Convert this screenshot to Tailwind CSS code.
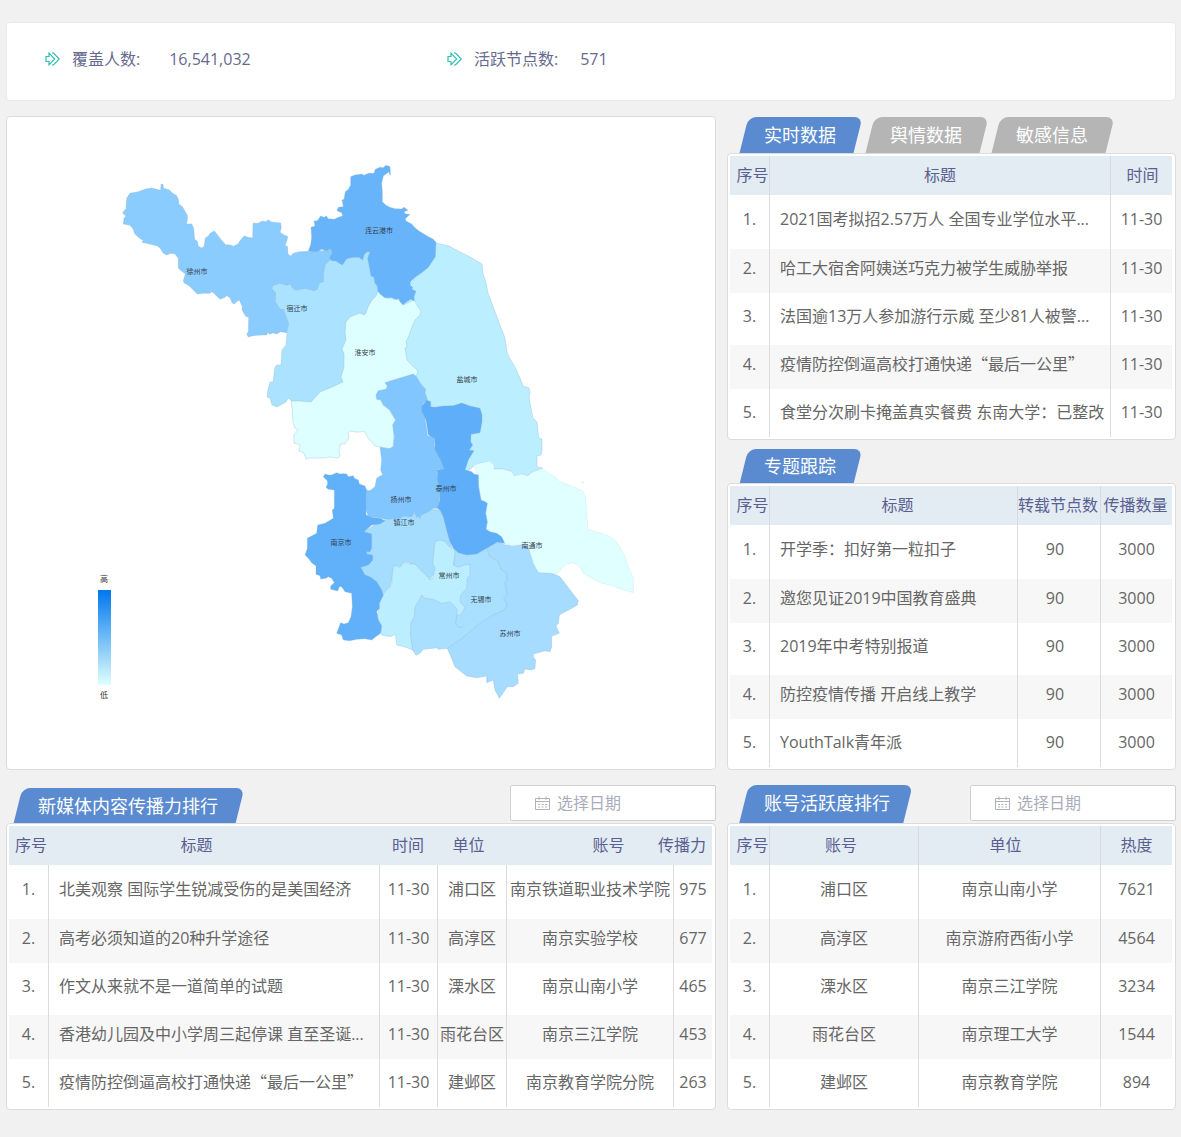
<!DOCTYPE html>
<html lang="zh-CN">
<head>
<meta charset="utf-8">
<meta name="viewport" content="width=device-width, initial-scale=1">
<title>数据总览</title>
<script src="https://cdn.jsdelivr.net/npm/@tailwindcss/browser@4"></script>
</head>
<body class="min-h-screen bg-[#f1f1f1] pt-[22px] pr-[5px] pb-7 pl-1.5 font-['Open_Sans','Noto_Sans_CJK_SC',sans-serif] text-base text-[#666]">

<!-- Totals -->
<section class="flex h-[79px] items-center rounded border border-[#e9e9e9] bg-white pb-1.5 pl-[38px] text-[#666a8f]">
  <dl class="flex w-[402px] items-center">
    <dt class="flex items-center gap-3">
      <svg class="h-3.5 w-[15px]" viewBox="0 0 15 14" fill="none" stroke="#2fbfb3" stroke-width="1.2" aria-hidden="true"><path d="M1 4.5h3V1.2L9.7 7 4 12.8V9.500H1z"/><path d="M7 1h1.500L14.200 7l-5.700 6H7"/></svg>
      覆盖人数:
    </dt>
    <dd class="ml-[29px]">16,541,032</dd>
  </dl>
  <dl class="flex items-center">
    <dt class="flex items-center gap-3">
      <svg class="h-3.5 w-[15px]" viewBox="0 0 15 14" fill="none" stroke="#2fbfb3" stroke-width="1.2" aria-hidden="true"><path d="M1 4.5h3V1.2L9.7 7 4 12.8V9.500H1z"/><path d="M7 1h1.500L14.200 7l-5.700 6H7"/></svg>
      活跃节点数:
    </dt>
    <dd class="ml-[22px]">571</dd>
  </dl>
</section>

<main class="mt-[15px] grid grid-cols-[minmax(0,710fr)_minmax(0,449fr)] gap-x-[11px] gap-y-[15px]">

  <!-- Province map -->
  <section class="rounded border border-[#dcdcdc] bg-white">
    <svg class="block w-full font-['Noto_Sans_CJK_SC',sans-serif]" viewBox="7 117 708 651" role="img" aria-label="江苏省传播热度地图">
      <defs>
        <linearGradient id="heat" x1="0" y1="0" x2="0" y2="1"><stop offset="0" stop-color="#0077ee"/><stop offset="1" stop-color="#e0ffff"/></linearGradient>
      </defs>
      <g stroke="#8fb4d0" stroke-opacity=".35" stroke-linejoin="round">
        <path id="yancheng" fill="#bbeeff" d="M436 243L449 246L460 252L472 258L482 264L483 273L486 283L488 293L494 309L500 325L505 338L507 352L509 357L515 367L520 378L523 386L529 388L530 393L529 397L531 408L533 418L537 422L538 432L539 438L542 439L542 450L541 455L537 456L537 467L543 468L533 472L530 474L527 476L522 474L515 476L511 471L503 469L494 469L488 462L480 463L475 465L467 472L440 440L428 405L405 385L395 345L400 300L420 270Z"/>
        <path id="huaian" fill="#deffff" d="M378 291L385 298L400 300L403 305L414 300L417 305L421 311L420 315L415 320L412 327L408 338L406 341L407 347L405 348L407 360L415 368L418 371L417 374L400 400L383 405L390 410L392 415L396 420L393 425L394 433L393 447L389 449L382 447L375 446L368 438L364 431L360 432L356 432L350 431L348 433L349 438L346 442L345 444L340 444L340 448L339 450L340 456L338 458L330 457L323 458L310 458L306 459L304 453L299 451L300 445L294 443L294 435L298 430L295 428L293 422L292 407L291 402L300 380L335 340L340 310L360 290Z"/>
        <path id="suqian" fill="#abe2ff" d="M272 285L300 270L340 240L372 240L378 291L376 296L372 300L368 307L366 313L364 315L360 313L350 317L346 322L345 332L346 340L342 349L344 354L344 367L341 377L343 382L332 387L320 392L311 402L300 401L292 401L288 398L286 402L277 407L272 405L270 398L267 397L268 390L270 382L273 382L275 367L277 365L281 365L282 350L286 345L287 333L284 324L278 312L272 301L272 292Z"/>
        <path id="xuzhou" fill="#8bccff" stroke-width="3" transform="translate(110 150) scale(.33333)" d="M50 145L60 130L85 125L107 117L125 114L140 118L152 121L153 103L159 103L161 115L178 120L188 130L200 137L205 148L207 163L217 170L224 182L232 196L232 210L229 222L245 222L251 235L254 268L262 274L265 288L274 294L282 290L286 264L295 258L300 250L313 243L322 254L334 270L347 284L362 285L370 289L385 281L390 272L402 258L415 262L428 264L429 220L445 220L456 213L466 215L475 210L485 216L512 219L514 234L510 247L522 255L533 259L531 272L525 286L533 290L534 313L542 318L550 310L568 305L597 304L620 300L635 303L655 297L667 310L660 330L645 345L640 375L640 395L628 398L622 418L612 422L585 415L558 421L548 415L542 403L528 406L520 402L508 400L488 407L484 415L497 428L496 455L510 478L520 478L533 512L536 523L530 548L512 545L500 552L488 549L478 553L474 547L470 555L460 555L440 556L425 558L415 561L410 552L415 545L416 500L408 500L396 480L397 470L388 450L380 455L372 462L366 458L360 443L350 437L345 442L330 448L322 440L312 430L305 425L300 430L280 430L262 432L250 420L238 408L222 398L220 392L226 372L205 355L205 325L195 312L183 310L170 315L160 310L150 294L142 288L130 285L110 280L95 277L100 272L85 262L73 250L70 238L60 226L40 222L42 205L48 198L38 190L42 182L48 178Z"/>
        <path id="lianyungang" fill="#67b4fb" stroke-width="3" transform="translate(300 150) scale(.33333)" d="M152 80L165 75L185 72L192 76L205 70L222 70L226 58L240 52L250 53L258 46L270 50L271 62L271 76L266 66L250 78L245 100L247 125L247 155L258 166L270 172L285 176L305 177L312 172L324 181L312 185L316 192L330 193L316 206L318 213L335 222L345 233L357 243L380 257L400 268L408 277L406 320L395 337L385 352L365 368L345 382L332 395L330 405L338 412L336 418L348 424L342 440L343 452L332 448L320 455L309 464L300 455L297 447L285 448L275 443L255 443L240 432L234 424L232 408L225 400L222 382L213 378L207 345L203 325L210 305L200 306L192 315L188 330L177 322L160 322L140 326L127 345L118 340L108 333L95 332L88 325L97 308L90 296L82 302L65 298L50 305L25 303L32 285L35 262L33 232L45 228L42 213L52 212L62 198L72 202L80 198L84 206L103 208L115 202L128 198L125 188L111 182L115 172L130 170L126 150L132 148L136 125L145 118L152 105Z"/>
        <path id="zhenjiang" fill="#a5ddff" stroke-width="3" transform="translate(290 460) scale(.33333)" d="M270 185L285 180L320 172L350 165L400 155L430 148L450 150L465 180L480 245L500 320L440 330L420 358L400 340L380 318L345 305L330 325L310 318L305 360L300 385L280 400L230 360L200 320L220 215Z"/>
        <path id="wuxi" fill="#a9e0ff" stroke-width="3" transform="translate(370 520) scale(.33333)" d="M255 80L300 85L350 80L358 108L385 125L395 150L410 158L412 180L405 190L412 225L402 235L412 255L405 270L370 285L330 310L270 360L235 385L205 388L200 383L190 385L160 388L150 400L138 406L128 390L115 340L125 240L180 180L250 140Z"/>
        <path id="changzhou" fill="#bbeeff" stroke-width="3" transform="translate(370 520) scale(.33333)" d="M195 65L210 60L225 65L238 80L253 88L255 105L250 135L265 142L280 136L300 132L300 165L292 175L290 205L272 225L270 245L285 262L275 282L260 288L262 270L250 255L240 246L215 250L190 238L165 235L155 225L148 240L135 260L133 290L122 310L122 350L128 390L108 382L80 375L77 343L60 350L35 345L32 320L20 290L30 260L28 245L45 215L65 195L68 150L75 135L90 142L100 127L115 132L135 132L150 148L162 160L180 180L188 175L195 145L188 130Z"/>
        <path id="lake" fill="none" stroke-width="3" transform="translate(370 520) scale(.33333)" d="M260 288L257 310L264 320L274 323L281 318"/>
        <path id="suzhou" fill="#a5dcff" stroke-width="3" transform="translate(370 520) scale(.33333)" d="M352 85L375 68L390 65L405 75L440 77L470 70L485 110L500 150L510 158L545 160L570 170L625 242L622 255L600 268L585 275L568 285L565 310L558 318L568 340L545 348L545 380L540 395L525 392L490 402L490 412L497 420L495 445L485 450L465 447L460 460L442 462L445 490L430 500L412 500L388 535L375 510L370 480L350 488L350 468L320 473L290 468L255 440L243 410L232 385L270 360L330 310L370 285L405 270L412 255L402 235L412 225L405 190L412 180L410 158L395 150L385 125L358 108Z"/>
        <path id="nantong" fill="#e0ffff" stroke-opacity=".15" stroke-width="3" transform="translate(400 370) scale(.33333)" d="M220 285L240 280L268 273L282 285L282 298L310 298L330 305L342 318L365 312L385 318L392 310L400 305L428 295L440 305L465 320L475 332L505 345L530 355L548 362L556 380L560 420L563 465L562 478L580 483L610 492L640 505L660 530L675 560L685 590L700 625L700 668L670 660L640 648L600 638L575 625L550 610L540 590L520 578L500 583L485 595L472 612L455 610L415 607L400 580L385 530L368 522L335 528L314 520L258 478L262 455L257 430L262 400L243 390L236 350L235 315ZM543 337L552 337L549 339Z"/>
        <path id="yangzhou" fill="#81c6ff" stroke-width="3" transform="translate(260 370) scale(.33333)" d="M375 38L400 30L440 18L460 12L470 20L478 35L485 45L497 58L495 68L502 88L490 100L485 125L495 145L503 198L522 200L522 230L540 240L540 265L552 285L550 300L535 297L530 310L540 350L538 400L535 415L520 415L505 425L482 436L480 446L478 437L470 442L463 427L455 440L430 438L420 445L375 448L350 442L325 440L318 420L318 380L316 360L330 362L345 350L350 325L360 318L368 315L362 300L365 270L360 232L388 236L400 230L403 200L398 165L407 150L395 130L390 120L370 105L362 90L350 88L348 75L355 62L378 58L382 48Z"/>
        <path id="taizhou" fill="#5eaefa" stroke-width="3" transform="translate(400 370) scale(.33333)" d="M65 110L80 90L92 95L92 110L105 112L130 108L160 107L185 99L210 108L240 115L246 135L246 155L240 188L213 193L212 215L218 225L208 240L222 242L212 258L205 270L195 300L215 305L222 312L235 315L236 350L243 390L255 395L262 400L257 430L262 455L258 478L270 485L290 490L305 500L314 520L292 516L265 532L230 552L200 555L175 548L160 535L150 515L140 480L130 440L120 420L112 415L120 390L118 350L112 330L112 300L132 297L122 270L105 240L103 205L85 195L78 150L65 125Z"/>
        <path id="nanjing" fill="#60b0fa" stroke-width="3" transform="translate(290 460) scale(.33333)" d="M100 50L105 42L115 45L125 45L140 38L150 42L160 41L170 42L175 50L190 47L193 55L205 60L208 72L225 78L230 92L228 105L228 165L245 172L270 175L285 182L270 192L245 195L222 215L245 222L245 265L240 275L228 275L232 283L248 285L248 300L235 315L212 322L225 345L240 350L260 365L275 390L280 405L268 430L268 445L260 455L265 480L275 497L272 520L255 532L245 540L225 536L200 538L180 542L160 540L155 525L140 520L152 488L162 492L175 488L183 470L187 440L185 400L165 395L155 380L148 380L143 393L122 388L122 378L133 368L125 355L115 350L108 355L92 357L90 347L78 343L78 318L65 308L55 295L45 285L52 265L52 235L80 220L83 195L105 190L130 175L127 150L133 145L133 90L115 88L108 82L113 72L112 62Z"/>
      </g>
      <g font-size="7" fill="#33414d" text-anchor="middle">
        <text x="379" y="233">连云港市</text>
        <text x="197" y="274">徐州市</text>
        <text x="297" y="311">宿迁市</text>
        <text x="365" y="355">淮安市</text>
        <text x="467" y="382">盐城市</text>
        <text x="446" y="491">泰州市</text>
        <text x="401" y="502">扬州市</text>
        <text x="404" y="525">镇江市</text>
        <text x="341" y="545">南京市</text>
        <text x="532" y="548">南通市</text>
        <text x="449" y="578">常州市</text>
        <text x="481" y="602">无锡市</text>
        <text x="510" y="636">苏州市</text>
      </g>
      <g font-size="8" fill="#333" text-anchor="middle">
        <text x="104" y="582">高</text>
        <text x="104" y="698">低</text>
      </g>
      <rect x="98" y="590" width="13" height="95" fill="url(#heat)"/>
    </svg>
  </section>

  <!-- Live data and topics -->
  <div class="flex flex-col gap-[9px]">
    <section>
      <div class="flex gap-3.5 pt-px pl-[17px] text-lg text-white" role="tablist">
        <button type="button" role="tab" aria-selected="true" class="relative isolate h-9 px-5 before:absolute before:inset-y-0 before:left-0 before:-right-0.5 before:-z-10 before:-skew-x-[14deg] before:rounded-t-lg before:bg-[#5a8bd0]">实时数据</button>
        <button type="button" role="tab" aria-selected="false" class="relative isolate h-9 px-5 before:absolute before:inset-y-0 before:left-0 before:-right-0.5 before:-z-10 before:-skew-x-[14deg] before:rounded-t-lg before:bg-[#b5b5b5]">舆情数据</button>
        <button type="button" role="tab" aria-selected="false" class="relative isolate h-9 px-5 before:absolute before:inset-y-0 before:left-0 before:-right-0.5 before:-z-10 before:-skew-x-[14deg] before:rounded-t-lg before:bg-[#b5b5b5]">敏感信息</button>
      </div>
      <div class="rounded border border-[#dcdcdc] bg-white py-0.5 pr-[3px] pl-0.5">
        <table class="w-full table-fixed border-separate border-spacing-0 text-center whitespace-nowrap [&_td]:border-r [&_td]:border-[#dcdcdc] [&_td]:p-0 [&_td]:pb-0.5 [&_td:last-child]:border-r-0 [&_th]:h-[39px] [&_th]:border-r [&_th]:border-[#d5dbe0] [&_th]:p-0 [&_th]:pb-0.5 [&_th]:font-normal [&_th:last-child]:border-r-0">
          <colgroup><col class="w-10"><col><col class="w-[61px]"></colgroup>
          <thead class="bg-[#e3ebf3] text-[#5a5f91]"><tr><th><div class="pl-1.5">序号</div></th><th>标题</th><th><div class="pl-0.5">时间</div></th></tr></thead>
          <tbody class="[&>tr]:h-12 [&>tr:first-child]:h-[50px] [&>tr:nth-child(even)]:bg-[linear-gradient(transparent_4px,#f7f7f7_4px)]">
            <tr><td>1.</td><td><div class="truncate pl-2.5 text-left">2021国考拟招2.57万人 全国专业学位水平...</div></td><td>11-30</td></tr>
            <tr><td>2.</td><td><div class="truncate pl-2.5 text-left">哈工大宿舍阿姨送巧克力被学生威胁举报</div></td><td>11-30</td></tr>
            <tr><td>3.</td><td><div class="truncate pl-2.5 text-left">法国逾13万人参加游行示威 至少81人被警...</div></td><td>11-30</td></tr>
            <tr><td>4.</td><td><div class="truncate pl-2.5 text-left">疫情防控倒逼高校打通快递<span class="font-['Noto_Sans_CJK_SC',sans-serif] leading-none">“最后一公里”</span></div></td><td>11-30</td></tr>
            <tr><td>5.</td><td><div class="truncate pl-2.5 text-left">食堂分次刷卡掩盖真实餐费 东南大学：已整改</div></td><td>11-30</td></tr>
          </tbody>
        </table>
      </div>
    </section>

    <section>
      <div class="flex pl-[17px] text-lg text-white">
        <h2 class="relative isolate flex h-[34px] items-center px-5 before:absolute before:inset-y-0 before:left-0 before:-right-0.5 before:-z-10 before:-skew-x-[14deg] before:rounded-t-lg before:bg-[#5a8bd0]">专题跟踪</h2>
      </div>
      <div class="rounded border border-[#dcdcdc] bg-white py-0.5 pr-[3px] pl-0.5">
        <table class="w-full table-fixed border-separate border-spacing-0 text-center whitespace-nowrap [&_td]:border-r [&_td]:border-[#dcdcdc] [&_td]:p-0 [&_td]:pb-0.5 [&_td:last-child]:border-r-0 [&_th]:h-[39px] [&_th]:border-r [&_th]:border-[#d5dbe0] [&_th]:p-0 [&_th]:pb-0.5 [&_th]:font-normal [&_th:last-child]:border-r-0">
          <colgroup><col class="w-10"><col><col class="w-[83px]"><col class="w-[71px]"></colgroup>
          <thead class="bg-[#e3ebf3] text-[#5a5f91]"><tr><th><div class="pl-1.5">序号</div></th><th><div class="pl-2">标题</div></th><th><div class="pr-0.5">转载节点数</div></th><th><div class="pr-0.5">传播数量</div></th></tr></thead>
          <tbody class="[&>tr]:h-12 [&>tr:first-child]:h-[50px] [&>tr:nth-child(even)]:bg-[linear-gradient(transparent_4px,#f7f7f7_4px)]">
            <tr><td>1.</td><td><div class="truncate pl-2.5 text-left">开学季：扣好第一粒扣子</div></td><td><div class="pr-2">90</div></td><td>3000</td></tr>
            <tr><td>2.</td><td><div class="truncate pl-2.5 text-left">邀您见证2019中国教育盛典</div></td><td><div class="pr-2">90</div></td><td>3000</td></tr>
            <tr><td>3.</td><td><div class="truncate pl-2.5 text-left">2019年中考特别报道</div></td><td><div class="pr-2">90</div></td><td>3000</td></tr>
            <tr><td>4.</td><td><div class="truncate pl-2.5 text-left">防控疫情传播 开启线上教学</div></td><td><div class="pr-2">90</div></td><td>3000</td></tr>
            <tr><td>5.</td><td><div class="truncate pl-2.5 text-left">YouthTalk青年派</div></td><td><div class="pr-2">90</div></td><td>3000</td></tr>
          </tbody>
        </table>
      </div>
    </section>
  </div>

  <!-- Content ranking -->
  <section>
    <div class="flex h-[38px] justify-between pl-3">
      <h2 class="relative isolate flex h-[35px] items-center self-end px-5 text-lg text-white before:absolute before:inset-y-0 before:left-0 before:-right-0.5 before:-z-10 before:-skew-x-[14deg] before:rounded-t-lg before:bg-[#5a8bd0]">新媒体内容传播力排行</h2>
      <label class="flex h-9 w-[206px] items-center gap-[7px] rounded-xs border border-[#d0d0d0] bg-white pl-6">
        <svg class="h-[15px] w-[15px] shrink-0" viewBox="0 0 15 15" fill="none" stroke="#b0b3b8" aria-hidden="true"><path d="M.5 2.500h14v11H.5zM.5 5.500h14M4 .5v3.500M11 .5v3.500"/><path stroke-dasharray="2 1.500" d="M3 8.500h10M3 11h10"/></svg>
        <input type="text" aria-label="选择日期" placeholder="选择日期" class="w-full min-w-0 bg-transparent outline-none placeholder:text-[#a9adba]">
      </label>
    </div>
    <div class="rounded border border-[#dcdcdc] bg-white py-0.5 pr-[3px] pl-0.5">
      <table class="w-full table-fixed border-separate border-spacing-0 text-center whitespace-nowrap [&_td]:border-r [&_td]:border-[#dcdcdc] [&_td]:p-0 [&_td]:pb-0.5 [&_td:last-child]:border-r-0 [&_th]:h-[39px] [&_th]:p-0 [&_th]:pb-0.5 [&_th]:font-normal">
        <colgroup><col class="w-10"><col><col class="w-[58px]"><col class="w-[69px]"><col class="w-[167px]"><col class="w-[38px]"></colgroup>
        <thead class="bg-[#e3ebf3] text-[#5a5f91]"><tr><th><div class="pl-1">序号</div></th><th><div class="pr-9">标题</div></th><th><div class="pr-0.5">时间</div></th><th><div class="pr-2">单位</div></th><th><div class="pl-9">账号</div></th><th><div class="flex justify-end pr-1.5">传播力</div></th></tr></thead>
        <tbody class="[&>tr]:h-12 [&>tr:first-child]:h-[50px] [&>tr:nth-child(even)]:bg-[linear-gradient(transparent_4px,#f7f7f7_4px)]">
          <tr><td>1.</td><td><div class="truncate pl-2.5 text-left">北美观察 国际学生锐减受伤的是美国经济</div></td><td>11-30</td><td>浦口区</td><td>南京铁道职业技术学院</td><td>975</td></tr>
          <tr><td>2.</td><td><div class="truncate pl-2.5 text-left">高考必须知道的20种升学途径</div></td><td>11-30</td><td>高淳区</td><td>南京实验学校</td><td>677</td></tr>
          <tr><td>3.</td><td><div class="truncate pl-2.5 text-left">作文从来就不是一道简单的试题</div></td><td>11-30</td><td>溧水区</td><td>南京山南小学</td><td>465</td></tr>
          <tr><td>4.</td><td><div class="truncate pl-2.5 text-left">香港幼儿园及中小学周三起停课 直至圣诞...</div></td><td>11-30</td><td>雨花台区</td><td>南京三江学院</td><td>453</td></tr>
          <tr><td>5.</td><td><div class="truncate pl-2.5 text-left">疫情防控倒逼高校打通快递<span class="font-['Noto_Sans_CJK_SC',sans-serif] leading-none">“最后一公里”</span></div></td><td>11-30</td><td>建邺区</td><td>南京教育学院分院</td><td>263</td></tr>
        </tbody>
      </table>
    </div>
  </section>

  <!-- Account ranking -->
  <section>
    <div class="flex h-[38px] justify-between pl-[17px]">
      <h2 class="relative isolate flex h-[38px] items-center px-5 pb-0.5 text-lg text-white before:absolute before:inset-y-0 before:left-0 before:right-0.5 before:-z-10 before:-skew-x-[14deg] before:rounded-t-lg before:bg-[#5a8bd0]">账号活跃度排行</h2>
      <label class="flex h-9 w-[206px] items-center gap-[7px] rounded-xs border border-[#d0d0d0] bg-white pl-6">
        <svg class="h-[15px] w-[15px] shrink-0" viewBox="0 0 15 15" fill="none" stroke="#b0b3b8" aria-hidden="true"><path d="M.5 2.500h14v11H.5zM.5 5.500h14M4 .5v3.500M11 .5v3.500"/><path stroke-dasharray="2 1.500" d="M3 8.500h10M3 11h10"/></svg>
        <input type="text" aria-label="选择日期" placeholder="选择日期" class="w-full min-w-0 bg-transparent outline-none placeholder:text-[#a9adba]">
      </label>
    </div>
    <div class="rounded border border-[#dcdcdc] bg-white py-0.5 pr-[3px] pl-0.5">
      <table class="w-full table-fixed border-separate border-spacing-0 text-center whitespace-nowrap [&_td]:border-r [&_td]:border-[#dcdcdc] [&_td]:p-0 [&_td]:pb-0.5 [&_td:last-child]:border-r-0 [&_th]:h-[39px] [&_th]:border-r [&_th]:border-[#d5dbe0] [&_th]:p-0 [&_th]:pb-0.5 [&_th]:font-normal [&_th:last-child]:border-r-0">
        <colgroup><col class="w-10"><col class="w-[149px]"><col><col class="w-[71px]"></colgroup>
        <thead class="bg-[#e3ebf3] text-[#5a5f91]"><tr><th><div class="pl-1.5">序号</div></th><th><div class="pr-1.5">账号</div></th><th><div class="pr-2">单位</div></th><th>热度</th></tr></thead>
        <tbody class="[&>tr]:h-12 [&>tr:first-child]:h-[50px] [&>tr:nth-child(even)]:bg-[linear-gradient(transparent_4px,#f7f7f7_4px)]">
          <tr><td>1.</td><td>浦口区</td><td>南京山南小学</td><td>7621</td></tr>
          <tr><td>2.</td><td>高淳区</td><td>南京游府西街小学</td><td>4564</td></tr>
          <tr><td>3.</td><td>溧水区</td><td>南京三江学院</td><td>3234</td></tr>
          <tr><td>4.</td><td>雨花台区</td><td>南京理工大学</td><td>1544</td></tr>
          <tr><td>5.</td><td>建邺区</td><td>南京教育学院</td><td>894</td></tr>
        </tbody>
      </table>
    </div>
  </section>
</main>
</body>
</html>
